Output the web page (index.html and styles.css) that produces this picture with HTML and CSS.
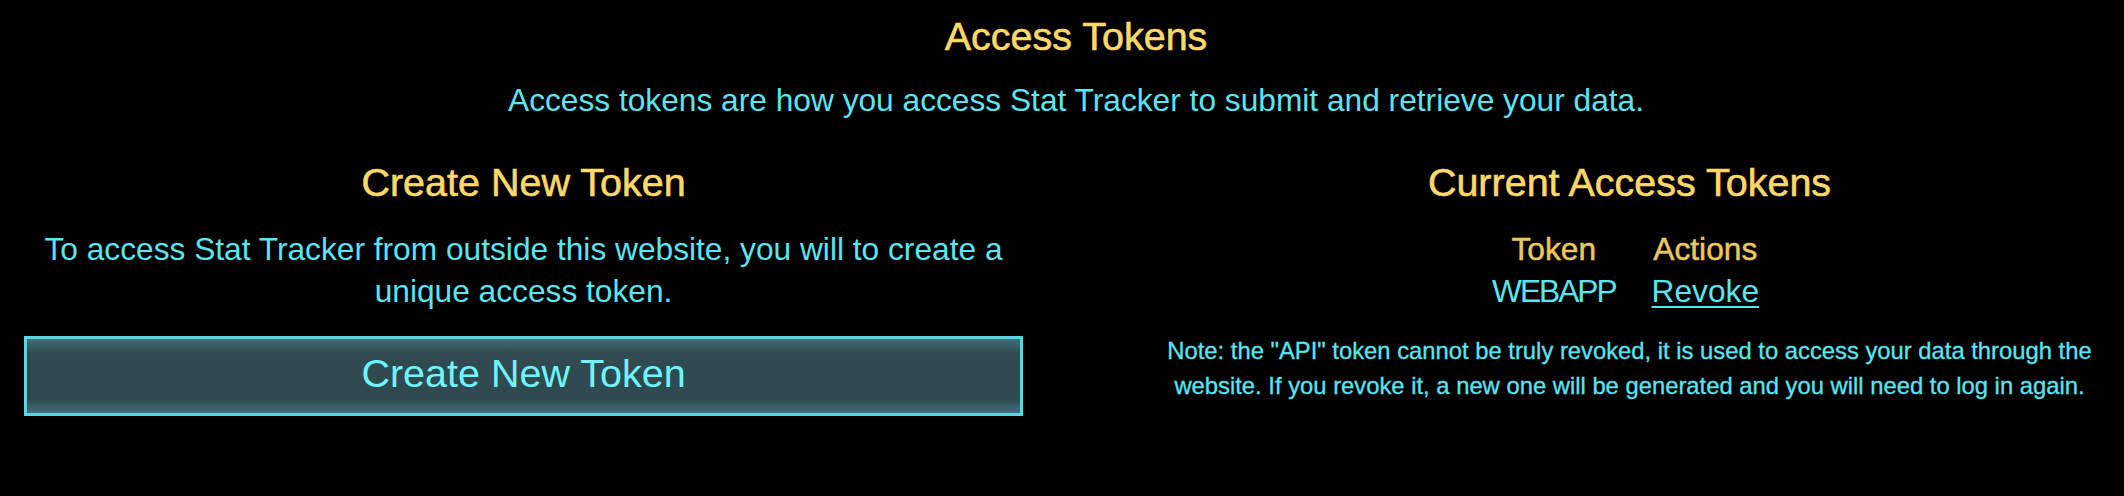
FILE: index.html
```html
<!DOCTYPE html>
<html lang="en">
<head>
<meta charset="utf-8">
<title>Access Tokens</title>
<link rel="stylesheet" href="styles.css">
</head>
<body>
<main class="page">
  <header class="intro">
    <h1 class="title">Access Tokens</h1>
    <p class="lead">Access tokens are how you access Stat Tracker to submit and retrieve your data.</p>
  </header>
  <div class="columns">
    <section class="col">
      <h2 class="heading">Create New Token</h2>
      <p class="text">To access Stat Tracker from outside this website, you will to create a unique access token.</p>
      <button class="create-btn" type="button">Create New Token</button>
    </section>
    <section class="col">
      <h2 class="heading">Current Access Tokens</h2>
      <table class="tokens">
        <thead>
          <tr><th>Token</th><th>Actions</th></tr>
        </thead>
        <tbody>
          <tr><td class="token-name">WEBAPP</td><td><a class="revoke" href="#">Revoke</a></td></tr>
        </tbody>
      </table>
      <p class="note">Note: the "API" token cannot be truly revoked, it is used to access your data through the website. If you revoke it, a new one will be generated and you will need to log in again.</p>
    </section>
  </div>
</main>
</body>
</html>
```
FILE: styles.css
```css
html, body {
  margin: 0;
  padding: 0;
  background: #000;
}
body {
  font-family: "Liberation Sans", Arial, sans-serif;
  color: #5be4f2;
}
.page {
  padding: 13px 0 40px 28px;
}
.intro {
  text-align: center;
}
.title {
  margin: 0;
  font-size: 39.5px;
  line-height: 46px;
  font-weight: normal;
  color: #fcd868;
  -webkit-text-stroke: 0.6px #fcd868;
}
.lead {
  margin: 21px 0 0;
  font-size: 31.7px;
  line-height: 40px;
}
.columns {
  display: grid;
  grid-template-columns: 999px 1fr;
  column-gap: 112px;
  margin-left: -4px;
  margin-top: 39px;
}
.col {
  display: flex;
  flex-direction: column;
  align-items: center;
  text-align: center;
}
.heading {
  margin: 0;
  font-size: 39.5px;
  line-height: 46px;
  font-weight: normal;
  color: #fcd868;
  -webkit-text-stroke: 0.6px #fcd868;
}
.text {
  margin: 23px 0 0;
  font-size: 31.7px;
  line-height: 42px;
}
.create-btn {
  margin-top: 24px;
  align-self: stretch;
  height: 80px;
  box-sizing: border-box;
  border: 3px solid #5cd6e2;
  background: linear-gradient(to bottom, #44707a 0, #2f4b50 14px, #2e4a4f calc(100% - 14px), #44707a 100%);
  color: #6ef5ff;
  font-family: "Liberation Sans", Arial, sans-serif;
  font-size: 39.5px;
  line-height: 46px;
  padding: 10px 0 16px;
  cursor: pointer;
}
.tokens {
  margin: 23px 8px 0 0;
  border-collapse: collapse;
  font-size: 31.7px;
  line-height: 42px;
}
.tokens th,
.tokens td {
  padding: 0 18px;
  text-align: center;
}
.tokens th {
  font-weight: normal;
  color: #ecc760;
  -webkit-text-stroke: 0.5px #ecc760;
}
.token-name {
  letter-spacing: -2px;
}
.revoke {
  color: #5be4f2;
  text-decoration: underline;
  text-decoration-thickness: 2px;
  text-underline-offset: 4px;
}
.note {
  margin: 21px 0 0;
  max-width: 960px;
  font-size: 23.8px;
  line-height: 35px;
  -webkit-text-stroke: 0.3px #5be4f2;
}
```
